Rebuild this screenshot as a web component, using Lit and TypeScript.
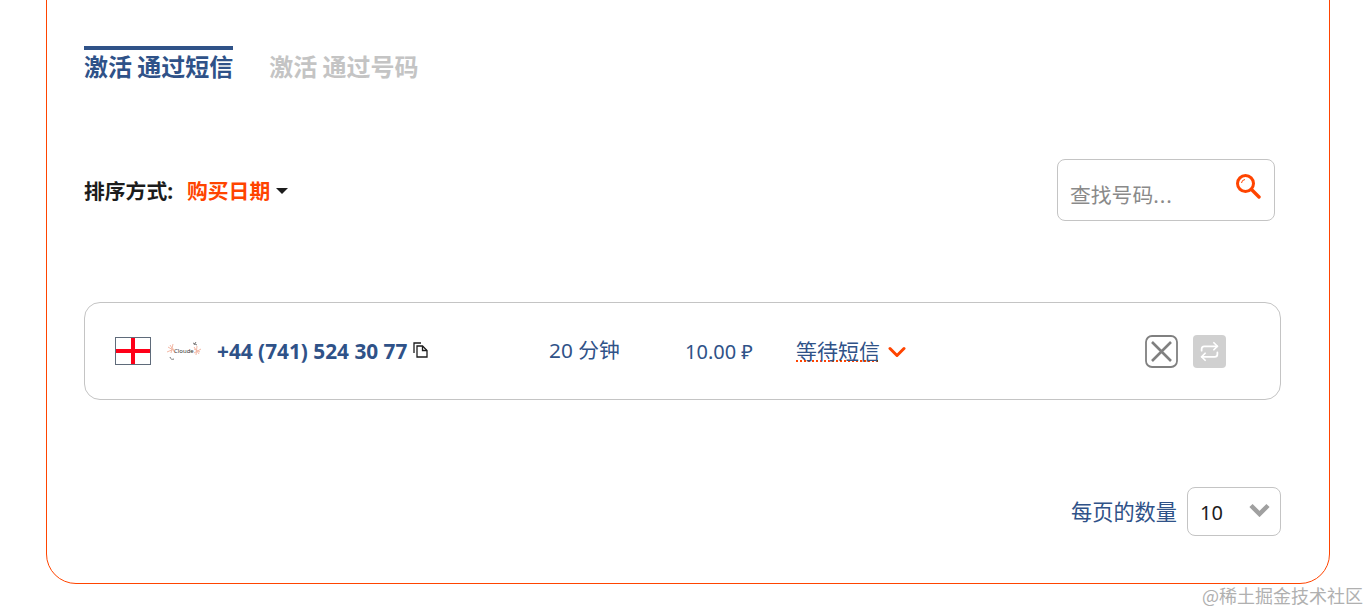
import { LitElement, html, css, svg } from "lit";
import { customElement } from "lit/decorators.js";

@customElement("app-root")
export class AppRoot extends LitElement {
  static styles = css`
    :host { display: block; height: 613px; overflow: hidden; position: relative; background: #fff;
      font-family: "Noto Sans", "Noto Sans CJK SC", sans-serif; color: #2f5288; }
    .card { box-sizing: border-box; margin: -30px 0 0 46px; width: 1284px; height: 614px;
      border: 1px solid #ff4400; border-radius: 30px; padding: 75px 48px 0 37px; background: #fff; }
    .tabs { display: flex; gap: 36px; height: 70px; }
    .tab { font-size: 24px; font-weight: 700; line-height: 34px; color: #c4c4c4; border-top: 4px solid transparent; height: 36px; word-spacing: -1px; white-space: nowrap; }
    .tab.on { color: #2f5288; border-top-color: #2f5288; }
    .toolbar { display: flex; justify-content: space-between; align-items: flex-start; margin-top: 43px; padding-right: 6px; height: 62px; }
    .sort { display: flex; align-items: center; font-size: 20.8px; font-weight: 700; color: #1c1c1c; line-height: 30px; margin-top: 17px; }
    .sort b { color: #ff4400; margin-left: 14px; font-weight: 700; }
    .caret { width: 0; height: 0; border: 6px solid transparent; border-top-color: #1c1c1c; border-bottom: 0; margin-left: 6px; }
    .search { box-sizing: border-box; width: 218px; height: 62px; border: 1px solid #c4c4c4; border-radius: 8px;
      display: flex; justify-content: space-between; padding: 13px 13px 0 12px; }
    .search span { font-size: 20.8px; color: #8a8a8a; line-height: 44px; }
    .search span i { font-style: normal; letter-spacing: 1px; }
    .search svg { width: 26px; height: 26px; margin-top: 0; }
    .row { box-sizing: border-box; margin-top: 81px; height: 98px; width: 1197px; border: 1px solid #c4c4c4; border-radius: 16px;
      display: flex; align-items: center; padding-left: 30px; }
    .flag { display: block; width: 36px; height: 28px; flex: none; }
    .logo { display: block; width: 36px; height: 28px; margin-left: 15px; flex: none; }
    .phone { font-size: 20.8px; font-weight: 700; margin: 0 0 0 15px; width: 190px; white-space: nowrap; }
    .copy { width: 15px; height: 16px; margin: -3px 0 0 6px; flex: none; }
    .time { font-size: 20.8px; margin-left: 121px; width: 136px; white-space: nowrap; margin-top: -5px; }
    .price { font-size: 20px; width: 111px; white-space: nowrap; }
    .status { font-size: 21px; white-space: nowrap; margin-top: -2px; text-decoration: underline dotted #ff4400 2px; text-underline-offset: 1px; }
    .chev { width: 18px; height: 12px; margin-left: 8px; margin-top: 2px; flex: none; }
    .close { width: 33px; height: 33px; margin-left: 239px; flex: none; display: block; }
    .repeat { box-sizing: border-box; width: 33px; height: 33px; margin-left: 15px; background: #d0d0d0; border-radius: 4px; flex: none;
      display: flex; align-items: center; justify-content: center; }
    .repeat svg { width: 21px; height: 21px; }
    .pager { display: flex; justify-content: flex-end; align-items: center; margin-top: 87px; width: 1197px; }
    .pager span { font-size: 21.2px; margin-top: -2px; }
    .select { box-sizing: border-box; width: 94px; height: 49px; border: 1px solid #c4c4c4; border-radius: 8px; margin-left: 10px;
      display: flex; align-items: center; justify-content: space-between; padding: 2px 10px 0 12px; font-size: 20px; color: #1c1c1c; }
    .select svg { width: 21px; height: 14px; margin-top: -6px; }
    .mark { position: absolute; left: 1202px; top: 583px; font-size: 18px; line-height: 24px; color: #b0b0b0; white-space: nowrap;
      font-family: "Noto Sans CJK SC", sans-serif; }
  `;

  render() {
    return html`
      <div class="card">
        <div class="tabs">
          <div class="tab on">激活 通过短信</div>
          <div class="tab">激活 通过号码</div>
        </div>
        <div class="toolbar">
          <div class="sort">排序方式:<b>购买日期</b><i class="caret"></i></div>
          <div class="search">
            <span>查找号码<i>...</i></span>
            <svg viewBox="0 0 26 26" fill="none" stroke="#ff4400">
              <circle cx="10.5" cy="10.5" r="8" stroke-width="3"/>
              <path d="M16.5 16.5L24 24" stroke-width="3.4" stroke-linecap="round"/>
              <path d="M6.5 10a4 4 0 0 1 3.5-3.5" stroke-width="1"/>
            </svg>
          </div>
        </div>
        <div class="row">
          <svg class="flag" viewBox="0 0 36 28">
            <rect x=".5" y=".5" width="35" height="27" fill="#fff" stroke="#5f6b7a"/>
            <rect x="16" y="1" width="4" height="26" fill="#ff0018"/>
            <rect x="1" y="12" width="34" height="4" fill="#ff0018"/>
          </svg>
          <svg class="logo" viewBox="0 0 36 28">
            ${svg`
              <g stroke="#f3b9a6" stroke-width="1" fill="none">
                <path d="M2 10l5 3M7 7l-2 9M1 15l7-3M4 8l5 8"/>
                <path d="M28 12l6 3M31 9l-1 9M35 12l-7 4M28 10l5 7"/>
              </g>
              <path d="M27 6l4 2M28 8l2-3M4 20a3 3 0 0 0 4 2" stroke="#777" stroke-width="1" fill="none"/>
              <text x="8" y="16" font-size="6" fill="#333" font-family="Noto Sans, sans-serif">Cloude</text>
            `}
          </svg>
          <div class="phone">+44 (741) 524 30 77</div>
          <svg class="copy" viewBox="0 0 15 16" fill="none" stroke="#1c1c1c" stroke-width="1.3">
            <path d="M1 11V1H8"/>
            <path d="M4 4H9.5L14 8.5V15H4Z"/>
            <path d="M9.5 4V8.5H14"/>
          </svg>
          <div class="time">20 分钟</div>
          <div class="price">10.00 ₽</div>
          <div class="status">等待短信</div>
          <svg class="chev" viewBox="0 0 18 12" fill="none" stroke="#ff4400" stroke-width="3" stroke-linecap="round" stroke-linejoin="round">
            <path d="M2 2.5L9 9.5L16 2.5"/>
          </svg>
          <svg class="close" viewBox="0 0 33 33" fill="none" stroke="#808080">
            <rect x="1" y="1" width="31" height="31" rx="6" stroke-width="1.8"/>
            <path d="M7 7L26 26M26 7L7 26" stroke-width="2.6"/>
          </svg>
          <div class="repeat">
            <svg viewBox="0 0 24 24" fill="none" stroke="#fff" stroke-width="2" stroke-linecap="round" stroke-linejoin="round">
              <path d="M17 2l4 4-4 4"/>
              <path d="M3 11V9a3 3 0 0 1 3-3h15"/>
              <path d="M7 22l-4-4 4-4"/>
              <path d="M21 13v2a3 3 0 0 1-3 3H3"/>
            </svg>
          </div>
        </div>
        <div class="pager">
          <span>每页的数量</span>
          <div class="select">
            10
            <svg viewBox="0 0 21 14" fill="none" stroke="#a0a0a0" stroke-width="4.5" stroke-linejoin="miter">
              <path d="M2 2.5L10.5 11L19 2.5"/>
            </svg>
          </div>
        </div>
      </div>
      <div class="mark">@稀土掘金技术社区</div>
    `;
  }
}
